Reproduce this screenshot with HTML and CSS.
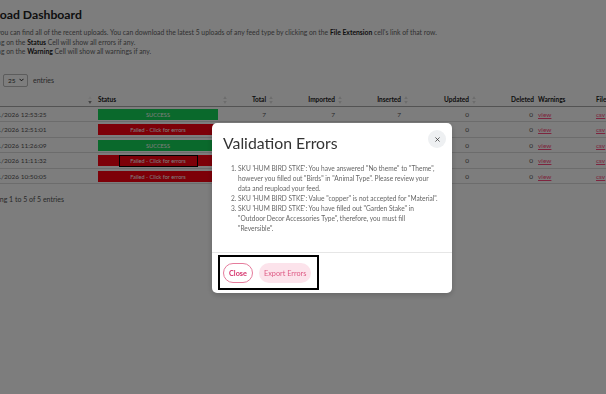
FILE: index.html
```html
<!DOCTYPE html>
<html lang="en">
<head>
    <meta charset="UTF-8">
    <meta name="viewport" content="width=device-width, initial-scale=1.0">
    <title>Upload Dashboard</title>
    <link rel="stylesheet" href="styles.css">
</head>
<body>
    <div class="page">
      <h1 class="title">Upload Dashboard</h1>
      <p class="intro">
        Here you can find all of the recent uploads. You can download the latest 5 uploads of any feed type by clicking on the <b>File Extension</b> cell's link of that row.<br>
        Clicking on the <b>Status</b> Cell will show all errors if any.<br>
        Clicking on the <b>Warning</b> Cell will show all warnings if any.
      </p>

      <div class="length">
        <span>Show</span>
        <span class="select">25
          <svg class="chevron" viewBox="0 0 6 4"><path d="M0.6 0.6 3 3 5.4 0.6" fill="none" stroke="#222" stroke-width="1.2"/></svg>
        </span>
        <span>entries</span>
      </div>

      <table class="uploads">
        <colgroup>
          <col class="c-date"><col class="c-status"><col class="c-total"><col class="c-imported">
          <col class="c-inserted"><col class="c-updated"><col class="c-deleted"><col class="c-warn"><col class="c-file">
        </colgroup>
        <thead>
          <tr>
            <th class="sortable left">Date <svg class="sort active" viewBox="0 0 4 9"><path class="up" d="M2 0 4 3.5H0z"/><path class="down" d="M2 9 0 5.5h4z"/></svg></th>
            <th class="sortable left">Status <svg class="sort" viewBox="0 0 4 9"><path d="M2 0 4 3.5H0z"/><path d="M2 9 0 5.5h4z"/></svg></th>
            <th class="sortable">Total <svg class="sort" viewBox="0 0 4 9"><path d="M2 0 4 3.5H0z"/><path d="M2 9 0 5.5h4z"/></svg></th>
            <th class="sortable">Imported <svg class="sort" viewBox="0 0 4 9"><path d="M2 0 4 3.5H0z"/><path d="M2 9 0 5.5h4z"/></svg></th>
            <th class="sortable">Inserted <svg class="sort" viewBox="0 0 4 9"><path d="M2 0 4 3.5H0z"/><path d="M2 9 0 5.5h4z"/></svg></th>
            <th class="sortable">Updated <svg class="sort" viewBox="0 0 4 9"><path d="M2 0 4 3.5H0z"/><path d="M2 9 0 5.5h4z"/></svg></th>
            <th class="plain">Deleted</th>
            <th class="plain left">Warnings</th>
            <th class="plain left">File Extension</th>
          </tr>
        </thead>
        <tbody>
          <tr>
            <td class="date">02/11/2026 12:53:25</td>
            <td class="status"><span class="bar ok">SUCCESS</span></td>
            <td>7</td><td>7</td><td>7</td><td>0</td><td class="del">0</td>
            <td class="link"><a href="#">view</a></td><td class="link"><a href="#">csv</a></td>
          </tr>
          <tr>
            <td class="date">02/11/2026 12:51:01</td>
            <td class="status"><span class="bar fail">Failed - Click for errors</span></td>
            <td>7</td><td>0</td><td>0</td><td>0</td><td class="del">0</td>
            <td class="link"><a href="#">view</a></td><td class="link"><a href="#">csv</a></td>
          </tr>
          <tr>
            <td class="date">02/11/2026 11:26:09</td>
            <td class="status"><span class="bar ok">SUCCESS</span></td>
            <td>7</td><td>7</td><td>0</td><td>0</td><td class="del">0</td>
            <td class="link"><a href="#">view</a></td><td class="link"><a href="#">csv</a></td>
          </tr>
          <tr>
            <td class="date">02/11/2026 11:11:32</td>
            <td class="status"><span class="bar fail"><span class="marked">Failed - Click for errors</span></span></td>
            <td>7</td><td>0</td><td>0</td><td>0</td><td class="del">0</td>
            <td class="link"><a href="#">view</a></td><td class="link"><a href="#">csv</a></td>
          </tr>
          <tr>
            <td class="date">02/11/2026 10:50:05</td>
            <td class="status"><span class="bar fail">Failed - Click for errors</span></td>
            <td>7</td><td>0</td><td>0</td><td>0</td><td class="del">0</td>
            <td class="link"><a href="#">view</a></td><td class="link"><a href="#">csv</a></td>
          </tr>
        </tbody>
      </table>

      <div class="info">Showing 1 to 5 of 5 entries</div>
    </div>

    <div class="backdrop">
      <div class="modal">
        <div class="modal-header">
          <h2 class="modal-title">Validation Errors</h2>
          <button class="btn-close" type="button">
            <svg viewBox="0 0 6 6"><path d="M0.5 0.5 5.5 5.5M5.5 0.5 0.5 5.5" stroke="#333" stroke-width="0.9"/></svg>
          </button>
        </div>
        <div class="modal-body">
          <ol class="errors">
            <li>SKU 'HUM BIRD STKE': You have answered "No theme" to "Theme", however you filled out "Birds" in "Animal Type". Please review your data and reupload your feed.</li>
            <li>SKU 'HUM BIRD STKE': Value "copper" is not accepted for "Material".</li>
            <li>SKU 'HUM BIRD STKE': You have filled out "Garden Stake" in "Outdoor Decor Accessories Type", therefore, you must fill "Reversible".</li>
          </ol>
        </div>
        <div class="modal-footer">
          <div class="marked-box">
            <button class="btn btn-outline" type="button">Close</button>
            <button class="btn btn-soft" type="button">Export Errors</button>
          </div>
        </div>
      </div>
    </div>
</body>
</html>
```

FILE: styles.css
```css
body { margin: 0; background: #fff; font-family: Lato, "Liberation Sans", sans-serif; color: #555; overflow: hidden; }

.page { margin-left: -19px; width: 680px; }
.title { margin: 6px 0 0; font-size: 12.2px; line-height: 18px; font-weight: 700; color: #222; }
.intro { margin: 4px 0 0; font-size: 6.8px; line-height: 9.5px; color: #666; white-space: nowrap; }
.intro b { color: #222; }

.length { margin-top: 17px; display: flex; align-items: center; gap: 5px; height: 13px; font-size: 7px; color: #555; }
.select { display: flex; align-items: center; justify-content: space-between; width: 25px; height: 13px; box-sizing: border-box; padding: 0 3px 0 4px; border: 1px solid #bbb; border-radius: 2px; font-size: 6.5px; color: #333; }
.chevron { width: 5px; height: 4px; }

.uploads { margin-top: 6px; border-collapse: collapse; table-layout: fixed; width: 673px; font-size: 6.5px; }
.c-date { width: 114px; }
.c-status { width: 135px; }
.c-total { width: 46px; }
.c-imported { width: 69px; }
.c-inserted { width: 66px; }
.c-updated { width: 68px; }
.c-deleted { width: 57px; }
.c-warn { width: 58px; }
.c-file { width: 60px; }

.uploads th { position: relative; height: 13px; padding: 0 10px 0 2px; text-align: right; font-weight: 700; color: #222; border-bottom: 1px solid #aaa; white-space: nowrap; }
.uploads th.left { text-align: left; padding-left: 3px; }
.uploads th.plain { padding-right: 2px; }
.uploads th.plain.left { padding-left: 2px; }
.sort { position: absolute; right: 3px; top: 3px; width: 4px; height: 8px; fill: #ddd; }
.sort.active .down { fill: #888; }
.sort.active .up { fill: #eee; }

.uploads td { padding: 2px 10px 1.5px 2px; line-height: 11px; text-align: right; border-top: 1px solid #ddd; white-space: nowrap; color: #555; }
.uploads tbody tr:last-child td { border-bottom: 1px solid #ddd; }
.uploads td.date { text-align: left; }
.uploads td.status { padding-left: 3px; text-align: left; }
.uploads td.del { padding-right: 3px; }
.uploads td.link { text-align: left; padding-left: 2px; }
.uploads a { color: #ff4d80; text-decoration: underline; }

.bar { display: flex; justify-content: center; align-items: center; width: 120px; height: 11px; font-size: 5.6px; color: #fff; }
.bar.ok { background: #16d65a; }
.bar.fail { background: #ff0012; }
.marked { box-sizing: border-box; width: 79px; height: 12px; display: flex; align-items: center; justify-content: center; border: 1.5px solid #000; }

.info { margin-top: 10px; font-size: 7px; line-height: 10px; color: #555; }

.backdrop { position: fixed; inset: 0; background: rgba(0, 0, 0, 0.51); display: flex; align-items: flex-start; padding: 123px 0 0 212px; }
.modal { width: 240px; background: #fff; border-radius: 5px; box-shadow: 0 2px 6px rgba(0, 0, 0, 0.2); }
.modal-header { display: flex; justify-content: space-between; align-items: flex-start; padding: 7px 6px 0 11px; }
.modal-title { margin: 3px 0 0; font-size: 15.8px; line-height: 20px; font-weight: 400; color: #333; }
.btn-close { width: 18px; height: 18px; padding: 0; border: none; border-radius: 50%; background: #eef0f2; display: flex; align-items: center; justify-content: center; }
.btn-close svg { width: 5px; height: 5px; }

.modal-body { padding: 10px 10px 0 11px; }
.errors { margin: 0 0 19px; padding-left: 15px; font-size: 6.6px; line-height: 10px; color: #666; }

.modal-footer { border-top: 1px solid #e6e6e6; padding: 2px 0 3px 6px; display: flex; }
.marked-box { display: flex; gap: 6px; padding: 6px 6px 5px 3px; border: 2px solid #000; }
.btn { height: 20px; border-radius: 10px; font-family: inherit; font-size: 7.3px; padding: 0 5px; }
.btn-outline { border: 1px solid #e57c9c; background: #fff; color: #d6336c; font-weight: 700; }
.btn-soft { border: none; background: #fce3eb; color: #de5a84; padding: 0 5px; }
```
